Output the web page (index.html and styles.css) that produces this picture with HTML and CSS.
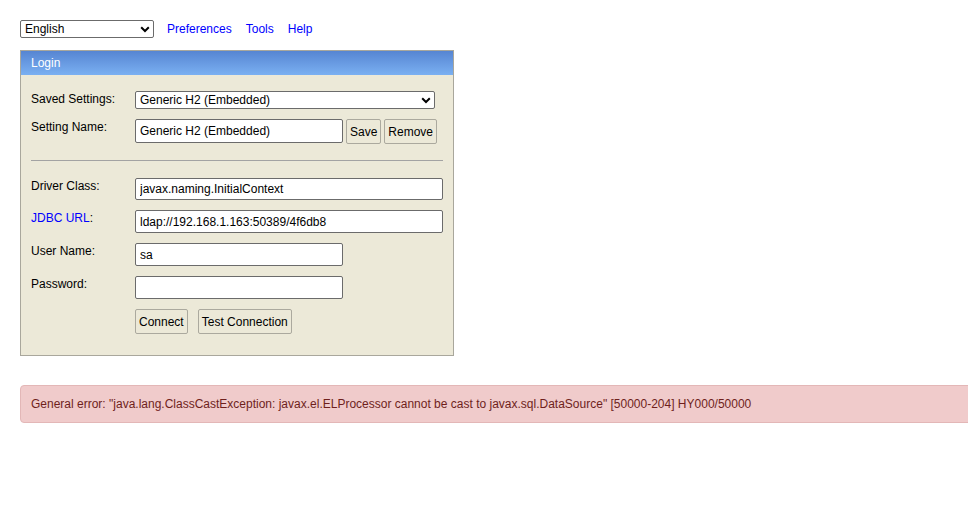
FILE: index.html
```html
<!DOCTYPE html>
<html lang="en">
<head>
<meta charset="utf-8">
<title>H2 Console</title>
<link rel="stylesheet" href="styles.css">
</head>
<body>
<div class="page">
  <div class="topbar">
    <div class="sel-wrap lang">
      <select class="sel"><option>English</option></select>
      <svg class="chev" width="10" height="7" viewBox="0 0 10 7"><path d="M1.2 1.3 L5 5 L8.8 1.3" fill="none" stroke="#000" stroke-width="2"/></svg>
    </div>
    <nav class="toplinks">
      <a class="toplink" href="#">Preferences</a>
      <a class="toplink" href="#">Tools</a>
      <a class="toplink" href="#">Help</a>
    </nav>
  </div>

  <div class="login">
    <div class="login-head">Login</div>
    <div class="login-body">
      <div class="row">
        <span class="lbl">Saved Settings:</span>
        <div class="sel-wrap saved">
          <select class="sel"><option>Generic H2 (Embedded)</option></select>
          <svg class="chev" width="10" height="7" viewBox="0 0 10 7"><path d="M1.2 1.3 L5 5 L8.8 1.3" fill="none" stroke="#000" stroke-width="2"/></svg>
        </div>
      </div>
      <div class="row">
        <span class="lbl">Setting Name:</span>
        <div class="inline">
          <input class="inp inp-name" type="text" value="Generic H2 (Embedded)">
          <button class="btn" type="button">Save</button>
          <button class="btn" type="button">Remove</button>
        </div>
      </div>
      <hr class="sep">
      <div class="row">
        <span class="lbl">Driver Class:</span>
        <input class="inp inp-wide inp-driver" type="text" value="javax.naming.InitialContext">
      </div>
      <div class="row">
        <span class="lbl"><a class="lbl-link" href="#">JDBC URL</a>:</span>
        <input class="inp inp-wide" type="text" value="ldap://192.168.1.163:50389/4f6db8">
      </div>
      <div class="row">
        <span class="lbl">User Name:</span>
        <input class="inp inp-short" type="text" value="sa">
      </div>
      <div class="row">
        <span class="lbl">Password:</span>
        <input class="inp inp-short" type="password" value="">
      </div>
      <div class="row">
        <span class="lbl"></span>
        <div class="actions">
          <button class="btn" type="button">Connect</button>
          <button class="btn" type="button">Test Connection</button>
        </div>
      </div>
    </div>
  </div>

  <div class="error">General error: "java.lang.ClassCastException: javax.el.ELProcessor cannot be cast to javax.sql.DataSource" [50000-204] HY000/50000</div>
</div>
</body>
</html>
```

FILE: styles.css
```css
* { box-sizing: border-box; }

html, body {
  margin: 0;
  padding: 0;
  background: #ffffff;
  overflow: hidden;
}

body {
  font-family: "Liberation Sans", Arial, sans-serif;
  font-size: 12px;
  line-height: 14px;
  color: #000;
}

.page {
  padding: 20px;
}

/* top bar */
.topbar {
  display: flex;
  align-items: center;
  height: 18px;
}

.toplinks {
  display: flex;
  gap: 14px;
  margin-left: 13px;
}

.toplink {
  color: #0000ff;
  text-decoration: none;
}

/* selects */
.sel-wrap {
  position: relative;
  height: 18px;
}

.sel-wrap.lang { width: 134px; }
.sel-wrap.saved { width: 300px; }

.sel {
  -webkit-appearance: none;
  appearance: none;
  width: 100%;
  height: 18px;
  margin: 0;
  padding: 0 18px 0 4px;
  border: 1px solid #6b6b6b;
  border-radius: 2px;
  background: #fff;
  font-family: "Liberation Sans", Arial, sans-serif;
  font-size: 12px;
  line-height: 16px;
  color: #000;
}

.chev {
  position: absolute;
  right: 4px;
  top: 6px;
  pointer-events: none;
}

/* login box */
.login {
  margin-top: 12px;
  width: 434px;
  border: 1px solid #a9a79c;
  background: #ece9d8;
}

.login-head {
  height: 24px;
  padding: 5px 10px;
  color: #fff;
  background: linear-gradient(to bottom, #5685d2, #7ab0f2);
}

.login-body {
  padding: 16px 10px 21px 10px;
  display: flex;
  flex-direction: column;
  gap: 10px;
}

.row {
  display: flex;
  align-items: flex-start;
}

.lbl {
  width: 104px;
  flex: none;
  padding-top: 1px;
}

.lbl-link {
  color: #0000ff;
  text-decoration: none;
}

.inline {
  display: flex;
  gap: 3px;
}

.actions {
  display: flex;
  gap: 10px;
}

.inp {
  height: 23px;
  margin: 0;
  padding: 0 4px;
  border: 1px solid #6b6b6b;
  border-radius: 2px;
  background: #fff;
  font-family: "Liberation Sans", Arial, sans-serif;
  font-size: 12px;
  color: #000;
  outline: none;
}

.inp-name { width: 208px; height: 24px; }
.inp-wide { width: 308px; }
.inp-driver { height: 22px; }
.inp-short { width: 208px; }

.btn {
  height: 25px;
  margin: 0;
  padding: 0 3px;
  border: 1px solid #aba99e;
  border-radius: 2px;
  background: #ece9d8;
  font-family: "Liberation Sans", Arial, sans-serif;
  font-size: 12px;
  color: #000;
}

.sep {
  margin: 6px 0 7px 0;
  height: 1px;
  border: 0;
  background: #a3a3a3;
}

/* error */
.error {
  margin-top: 29px;
  width: 980px;
  padding: 11px 10px;
  border: 1px solid #e3b7b7;
  border-radius: 4px;
  background: #f0cbcb;
  color: #6f1f1c;
}
```
